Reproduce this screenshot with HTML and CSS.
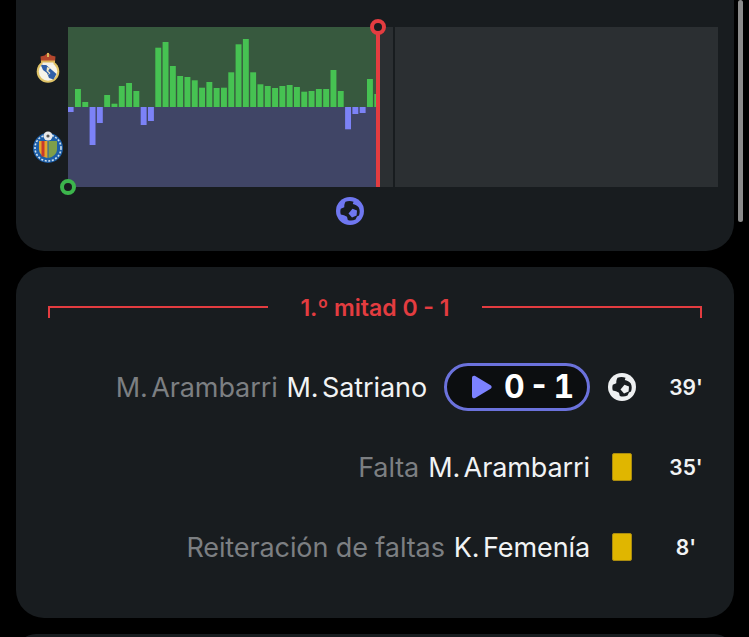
FILE: index.html
```html
<!DOCTYPE html>
<html lang="es">
<head>
<meta charset="utf-8">
<title>Partido</title>
<link rel="stylesheet" href="styles.css">
</head>
<body>
<div class="page">
  <section class="card card-graph">
    <div class="crests">
      <svg class="crest" width="26" height="32" viewBox="0 0 26 32">
        <circle cx="13" cy="19.5" r="11.3" fill="#e0c468"/>
        <circle cx="13" cy="19.5" r="9.2" fill="#f6f4ea"/>
        <path d="M6 13.5 L9.5 11.5 L21.5 22 L18.5 27.5 L14 26 L12 21 L8 18 Z" fill="#2f5fa8"/>
        <path d="M12 15 L15 16 L13.2 19 L15.5 21 L13 23.5 L14 21.3 L11.5 19 Z" fill="#f3e9c2"/>
        <path d="M6 10 L5.5 4.5 L9.5 3.5 L13 0.5 L16.5 3.5 L20.5 4.5 L20 10 Z" fill="#b4472d"/>
        <path d="M6 8.5 H20 V11 H6 Z M12 1 H14 V5 H12 Z" fill="#dcb65a"/>
        <rect x="7.5" y="10.5" width="11" height="2.5" fill="#f1efe6"/>
      </svg>
      <svg class="crest" width="32" height="34" viewBox="0 0 32 34">
        <circle cx="16" cy="18" r="15" fill="#1c5ea8"/>
        <circle cx="16" cy="18" r="13" fill="none" stroke="#cfe0ee" stroke-width="1.6" stroke-dasharray="2 1.6"/>
        <circle cx="16" cy="18" r="10.5" fill="#1c5ea8"/>
        <path d="M7 11 H15.5 V28 C11 27 7 24 7 19 Z" fill="#e2a52b"/>
        <rect x="9.5" y="11" width="3" height="15.5" fill="#c8392d"/>
        <path d="M16.5 11 H25 V19 C25 24 21 27 16.5 28 Z" fill="#7f9f4a"/>
        <circle cx="16" cy="6" r="4.5" fill="#e8e8e8"/>
        <circle cx="16" cy="6" r="1.6" fill="#555"/>
      </svg>
    </div>
    <div class="timeline">
      <svg class="chart" width="650" height="160" viewBox="0 0 650 160">
        <rect class="zone-home" x="0" y="0" width="310" height="80"/>
        <rect class="zone-away" x="0" y="80" width="310" height="80"/>
        <rect class="zone-rest" x="310" y="0" width="15" height="160"/>
        <rect class="zone-rest" x="327" y="0" width="323" height="160"/>
        <g id="bars"></g>
      </svg>
      <span class="marker marker-start"></span>
      <span class="progress"></span>
      <span class="marker marker-now"></span>
      <svg class="pin-goal ball-icon" width="28" height="28" viewBox="0 0 28 28"><use href="#ball"/></svg>
    </div>
  </section>

  <section class="card card-events">
    <header class="period">
      <span class="period-side period-left"></span>
      <h2 class="period-title">1.º mitad 0 - 1</h2>
      <span class="period-side period-right"></span>
    </header>
    <div class="events">
      <div class="event">
        <p class="names"><span class="muted abbr">M. Arambarri</span><span class="name abbr">M. Satriano</span></p>
        <button class="score" type="button">
          <svg class="play" width="20" height="24" viewBox="0 0 20 24"><path d="M0 3 C0 1 1.7 .1 3.2 1 L18.6 10.3 C20 11.1 20 12.9 18.6 13.7 L3.2 23 C1.7 23.9 0 23 0 21 Z"/></svg>
          <span class="score-text">0 - 1</span>
        </button>
        <span class="event-icon">
          <svg class="ball-icon ball-white" width="28" height="28" viewBox="0 0 28 28">
            <defs>
              <g id="ball">
                <circle cx="14" cy="14" r="14" fill="currentColor"/>
                <path fill="#181c1f" d="M9.5 4.8 C12 3.8 15 3.8 17.5 4.8 L16.8 7 C19 7.4 21.5 8.6 22.8 10.5 C24 13 24 16 23 18.5 L21 19.5 L19.5 22.5 C17 23.8 14 23.8 11.8 23 L11 19.8 L8 18.2 L4.8 17.6 C4.2 15.5 4.2 13.5 4.8 11.8 L8.3 10.2 C8.2 8 8.6 6.2 9.5 4.8 Z"/>
                <path fill="currentColor" d="M16.5 11.7 L21 13.6 L20.6 18.6 L16 20.6 L12.5 16.5 Z"/>
              </g>
            </defs>
            <use href="#ball"/>
          </svg>
        </span>
        <span class="minute">39'</span>
      </div>
      <div class="event">
        <p class="names"><span class="muted">Falta</span><span class="name abbr">M. Arambarri</span></p>
        <span class="event-icon"><span class="yellow-card"></span></span>
        <span class="minute">35'</span>
      </div>
      <div class="event">
        <p class="names"><span class="muted">Reiteración de faltas</span><span class="name abbr">K. Femenía</span></p>
        <span class="event-icon"><span class="yellow-card"></span></span>
        <span class="minute">8'</span>
      </div>
    </div>
  </section>

  <section class="card card-next"></section>
</div>
<div class="scrollbar"></div>
<script src="chart.js"></script>
</body>
</html>
```

FILE: styles.css
```css
* { box-sizing: border-box; }
html, body { margin: 0; height: 100%; overflow: hidden; }
body {
  background: #000;
  color: #f1f3f4;
  font-family: Inter, "Liberation Sans", sans-serif;
}
.page {
  display: flex;
  flex-direction: column;
  gap: 16px;
  height: 637px;
  overflow: hidden;
  padding: 0 15px 0 16px;
}
.card {
  background: #181c1f;
  border-radius: 28px;
  flex: none;
}
.card-graph {
  height: 251px;
  border-radius: 0 0 28px 28px;
  display: flex;
  padding: 27px 16px 0;
}
.crests {
  width: 32px;
  height: 160px;
  margin-right: 4px;
  display: flex;
  flex-direction: column;
  align-items: center;
  padding-top: 25px;
  gap: 46px;
}
.crest { display: block; flex: none; }
.timeline { position: relative; width: 650px; height: 160px; }
.chart { display: block; }
.zone-home { fill: #37593e; }
.zone-away { fill: #404566; }
.zone-rest { fill: #2b2f32; }
.bar-home { fill: #46c252; }
.bar-away { fill: #7c82f7; }
.progress {
  position: absolute;
  left: 308px;
  top: 0;
  width: 4px;
  height: 160px;
  background: #e33c40;
}
.marker {
  position: absolute;
  width: 16px;
  height: 16px;
  border-radius: 50%;
  background: #181c1f;
  border: 4px solid;
}
.marker-start { left: -8px; top: 152px; border-color: #3cb54c; }
.marker-now { left: 302px; top: -8px; border-color: #e33c40; }
.pin-goal { position: absolute; left: 268px; top: 170px; color: #6f77f0; }
.ball-icon { display: block; }

.card-events { height: 351px; padding: 28px 32px 0; }
.period { display: flex; justify-content: space-between; height: 24px; }
.period-side {
  width: 220px;
  height: 12px;
  margin-top: 11px;
  border-top: 2px solid #e33c40;
}
.period-left { border-left: 2px solid #e33c40; }
.period-right { border-right: 2px solid #e33c40; }
.period-title {
  margin: 0;
  font-size: 23px;
  line-height: 26px;
  font-weight: 600;
  color: #e33c40;
  white-space: nowrap;
}
.events {
  display: flex;
  flex-direction: column;
  gap: 32px;
  margin: 44px 0 0;
}
.event {
  display: flex;
  justify-content: flex-end;
  align-items: center;
  gap: 17px;
  height: 48px;
}
.names {
  margin: 0;
  display: flex;
  gap: 9px;
  padding-top: 2px;
  font-size: 27px;
  line-height: 32px;
  letter-spacing: -0.1px;
  white-space: nowrap;
}
.abbr { word-spacing: -4px; }
.muted { color: #7c7f82; }
.name { color: #f1f3f4; }
.score {
  display: flex;
  align-items: center;
  gap: 12px;
  width: 146px;
  height: 48px;
  padding: 0 0 0 25px;
  border: 3px solid #6b72dc;
  border-radius: 24px;
  background: #0c0e10;
  color: #fff;
  font: inherit;
}
.play { flex: none; fill: #7c82ff; }
.score-text {
  font-size: 32px;
  line-height: 40px;
  font-weight: 700;
  font-feature-settings: "tnum";
  word-spacing: -4.5px;
  white-space: nowrap;
}
.event-icon {
  width: 30px;
  display: flex;
  justify-content: center;
  flex: none;
}
.ball-white { color: #eef0f1; }
.yellow-card {
  width: 20px;
  height: 28px;
  background: #e0b600;
  border-radius: 2px;
  border: 1px solid #a98b10;
}
.minute {
  width: 32px;
  margin-left: 16px;
  font-size: 21px;
  font-weight: 600;
  color: #f1f3f4;
  white-space: nowrap;
  display: flex;
  justify-content: center;
}
.card-next { height: 40px; }
.scrollbar {
  position: absolute;
  right: 6px;
  top: 0;
  width: 5px;
  height: 222px;
  border-radius: 3px;
  background: #8b8b8b;
}
```

FILE: chart.js
```js
var values = [-5,18,5,-38,-16,12,3.3,21,24,16,-18,-14,59.3,65,41,31,30,26.7,19.3,25,19,19.3,34.7,62.7,68,34.7,22.7,21,19,21,22,20,15.3,16,18,18,37,16,-22.3,-7,-6,28,13];
var group = document.getElementById('bars');
var ns = 'http://www.w3.org/2000/svg';
values.forEach(function (v, i) {
  var r = document.createElementNS(ns, 'rect');
  var x = -0.3 + i * 7.3;
  var left = Math.max(0, x);
  r.setAttribute('x', left);
  r.setAttribute('width', Math.min(x + 5.9, 310) - left);
  r.setAttribute('y', v > 0 ? 80 - v : 80);
  r.setAttribute('height', Math.abs(v));
  r.setAttribute('class', v > 0 ? 'bar-home' : 'bar-away');
  group.appendChild(r);
});
```
